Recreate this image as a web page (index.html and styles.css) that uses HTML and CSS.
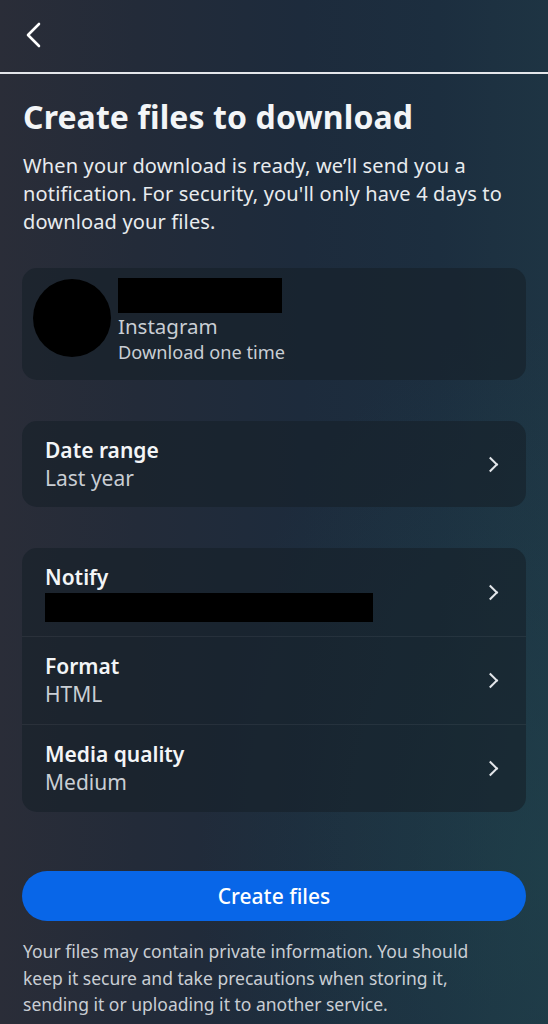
FILE: index.html
```html
<!DOCTYPE html>
<html lang="en">
<head>
  <meta charset="UTF-8" />
  <meta name="viewport" content="width=device-width, initial-scale=1.0"/>
  <title>Create files to download</title>
  <link rel="stylesheet" href="styles.css">
</head>
<body>
  <header class="topbar">
    <button class="back-btn" aria-label="Back">
      <svg width="18" height="26" viewBox="0 0 18 26"><path d="M15 2 L4 13 L15 24" fill="none" stroke="#fff" stroke-width="2.6" stroke-linecap="round" stroke-linejoin="round"/></svg>
    </button>
  </header>

  <main class="content">
    <h1>Create files to download</h1>
    <p class="intro">When your download is ready, we’ll send you a notification. For security, you'll only have 4 days to download your files.</p>

    <!-- account -->
    <section class="card account">
      <div class="avatar"></div>
      <div class="account-info">
        <div class="redact redact-name"></div>
        <div class="account-app">Instagram</div>
        <div class="account-sub">Download one time</div>
      </div>
    </section>

    <section class="card">
      <a class="row row-single" href="#">
        <div class="row-text">
          <div class="row-title">Date range</div>
          <div class="row-value">Last year</div>
        </div>
        <span class="chev"></span>
      </a>
    </section>

    <section class="card">
      <a class="row" href="#">
        <div class="row-text">
          <div class="row-title">Notify</div>
          <div class="redact redact-email"></div>
        </div>
        <span class="chev"></span>
      </a>
      <a class="row" href="#">
        <div class="row-text">
          <div class="row-title">Format</div>
          <div class="row-value">HTML</div>
        </div>
        <span class="chev"></span>
      </a>
      <a class="row" href="#">
        <div class="row-text">
          <div class="row-title">Media quality</div>
          <div class="row-value">Medium</div>
        </div>
        <span class="chev"></span>
      </a>
    </section>

    <button class="primary-btn">Create files</button>
    <p class="note">Your files may contain private information. You should keep it secure and take precautions when storing it, sending it or uploading it to another service.</p>
  </main>
</body>
</html>
```

FILE: styles.css
```css
:root {
  --text: #f3f5f7;
  --muted: #c9ced4;
  --card-bg: rgba(22, 32, 40, 0.6);
  --divider: rgba(255,255,255,0.06);
  --blue: #0866e8;
}
body {
  margin: 0;
  min-height: 1024px;
  font-family: 'Noto Sans', 'Open Sans', sans-serif;
  color: var(--text);
  background:
    radial-gradient(ellipse at 100% 85%, rgba(32,70,78,0.55) 0%, rgba(32,70,78,0) 45%),
    linear-gradient(90deg, #2a2d38 0%, #232b39 25%, #1d2b3c 55%, #1c2e3f 80%, #1e3443 100%);
}
.topbar {
  height: 74px;
  border-bottom: 2px solid #e4e6ea;
  display: flex;
  align-items: center;
  padding-left: 24px;
  box-sizing: border-box;
}
.back-btn {
  background: none;
  border: none;
  padding: 0;
  margin-top: -3px;
  cursor: pointer;
  display: flex;
}
.content {
  padding: 0 22px;
}
h1 {
  margin: 23px 0 0 1px;
  font-size: 32px;
  font-weight: 700;
  line-height: 40px;
  letter-spacing: 0.1px;
}
.intro {
  margin: 15px 0 0 1px;
  font-size: 20px;
  line-height: 28px;
  letter-spacing: 0.15px;
  color: #e8ebee;
}
.card {
  background: var(--card-bg);
  border-radius: 15px;
  overflow: hidden;
}
.account {
  margin-top: 32px;
  display: flex;
  align-items: flex-start;
  height: 112px;
  box-sizing: border-box;
  padding: 10px 11px 0;
  gap: 7px;
}
.avatar {
  width: 78px;
  height: 78px;
  margin-top: 1px;
  border-radius: 50%;
  background: #000;
  flex-shrink: 0;
}
.redact {
  background: #000;
}
.redact-name {
  width: 164px;
  height: 35px;
}
.account-app {
  font-size: 20.5px;
  line-height: 26px;
  color: var(--muted);
}
.account-sub {
  font-size: 18.2px;
  line-height: 26px;
  color: var(--muted);
}
.card + .card {
  margin-top: 41px;
}
.row {
  display: flex;
  align-items: center;
  height: 88px;
  box-sizing: border-box;
  padding: 0 22px 0 23px;
  text-decoration: none;
  color: inherit;
}
.row-single {
  height: 86px;
}
.row + .row {
  border-top: 1px solid var(--divider);
}
.row-text {
  flex: 1;
}
.row-title {
  font-size: 21px;
  font-weight: 600;
  line-height: 28px;
}
.row-value {
  font-size: 21px;
  line-height: 29px;
  color: var(--muted);
}
.redact-email {
  width: 328px;
  height: 29px;
  margin-top: 2px;
}
.chev {
  width: 9px;
  height: 9px;
  border-top: 2px solid #e3e6ea;
  border-right: 2px solid #e3e6ea;
  transform: rotate(45deg);
  margin-right: 8px;
}
.primary-btn {
  display: block;
  width: 100%;
  margin-top: 59px;
  height: 50px;
  border: none;
  border-radius: 25px;
  background: var(--blue);
  color: #fff;
  font-family: inherit;
  font-size: 21px;
  font-weight: 500;
  cursor: pointer;
}
.note {
  margin: 17px 0 0 1px;
  padding-right: 26px;
  font-size: 17.5px;
  line-height: 26.5px;
  color: var(--muted);
}
```
